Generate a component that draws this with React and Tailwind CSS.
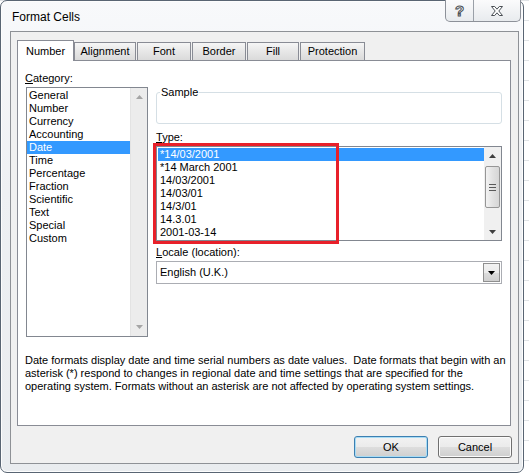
import React from 'react';

const categories = ['General', 'Number', 'Currency', 'Accounting', 'Date', 'Time', 'Percentage', 'Fraction', 'Scientific', 'Text', 'Special', 'Custom'];
const types = ['*14/03/2001', '*14 March 2001', '14/03/2001', '14/03/01', '14/3/01', '14.3.01', '2001-03-14'];
const tabs = [
  { label: 'Alignment', w: 'w-[62px]' },
  { label: 'Font', w: 'w-[54px]' },
  { label: 'Border', w: 'w-[54px]' },
  { label: 'Fill', w: 'w-[52px]' },
  { label: 'Protection', w: 'w-[65px]' },
];

function Arrow({ down, dim }) {
  return (
    <svg width="7" height="4" viewBox="0 0 7 4">
      <path d={down ? 'M0 0h7L3.5 4z' : 'M0 4h7L3.5 0z'} fill={dim ? '#a5a5a5' : '#404040'} />
    </svg>
  );
}

function ListRow({ text, selected }) {
  return (
    <div className={`h-[13px] leading-[13px] pl-[2px] whitespace-pre ${selected ? 'bg-[#3399ff] text-white' : 'text-black'}`}>
      {text}
    </div>
  );
}

function WinButton({ children, focused }) {
  return (
    <div
      className={`w-[74px] h-[22px] rounded-[3px] border flex items-center justify-center bg-[linear-gradient(to_bottom,#f2f2f2_0%,#ebebeb_50%,#dddddd_51%,#cfcfcf_100%)] ${
        focused ? 'border-[#3c7fb1] shadow-[inset_0_0_0_1px_#a8dcf5]' : 'border-[#707070] shadow-[inset_0_0_0_1px_#fcfcfc]'
      }`}
    >
      {children}
    </div>
  );
}

export default function App() {
  return (
    <div className="w-[529px] h-[476px] overflow-hidden bg-white bg-[linear-gradient(to_bottom,#e1e3e6_1px,transparent_1px)] bg-[size:100%_20px] font-['Liberation_Sans',Arial,sans-serif] text-[11px] text-black">
      <div className="w-[524px] h-[473px] flex flex-col rounded-[7px] border border-[#596573] bg-[linear-gradient(to_bottom,#f8f9fb,#eef0f3_40%,#e9ecef)] shadow-[inset_0_0_0_1px_#fdfdfd]">
        {/* title bar */}
        <div className="h-[30px] flex items-start pl-[11px] pr-[2px]">
          <div className="mt-[9px] text-[12px] leading-[14px] text-black">Format Cells</div>
          <div className="ml-auto -mt-px flex h-[22px] rounded-b-[5px] border border-t-0 border-[#8d9199] bg-[linear-gradient(to_bottom,#fbfbfc,#e8ebee)] overflow-hidden">
            <div className="w-[28px] flex items-center justify-center border-r border-[#9aa0a8] text-[15px] font-bold leading-none text-white [-webkit-text-stroke:1px_#4a4f55]">?</div>
            <div className="w-[46px] flex items-center justify-center">
              <svg width="12" height="10" viewBox="0 0 12 10">
                <path d="M0.5 0.5h3.2L6 3.2 8.3 0.5h3.2L7.8 5l3.7 4.5H8.3L6 6.8 3.7 9.5H0.5L4.2 5z" fill="#fff" stroke="#4a4f55" strokeWidth="1" strokeLinejoin="round" />
              </svg>
            </div>
          </div>
        </div>

        {/* client area */}
        <div className="ml-[9px] mr-[4px] mb-[8px] flex-1 flex flex-col border border-[#8e9196] bg-[#f0f0f0]">
          {/* tabs */}
          <div className="mt-[8px] ml-[6px] h-[20px] flex items-end">
            <div className="relative z-10 -mb-px w-[57px] h-[21px] border border-b-0 border-[#898c95] bg-white flex items-start justify-center pt-[4px] leading-[13px]">
              Number
            </div>
            {tabs.map((t, i) => (
              <div
                key={t.label}
                className={`${t.w} ${i > 0 ? 'ml-px' : ''} h-[18px] border border-b-0 border-[#898c95] bg-[linear-gradient(to_bottom,#f6f6f6,#e7e7e7_50%,#dadada)] flex items-start justify-center pt-[2px] leading-[13px]`}
              >
                {t.label}
              </div>
            ))}
          </div>

          {/* tab panel */}
          <div className="ml-[6px] w-[494px] h-[366px] border border-[#898c95] bg-white flex flex-col">
            <div className="flex pl-[8px] pt-[11px]">
              {/* category column */}
              <div className="w-[122px] flex flex-col">
                <div className="h-[13px] leading-[13px] -ml-px">
                  <span className="underline">C</span>ategory:
                </div>
                <div className="mt-[2px] h-[250px] border border-[#828790] flex">
                  <div className="flex-1 pt-px">
                    {categories.map((c) => (
                      <ListRow key={c} text={c} selected={c === 'Date'} />
                    ))}
                  </div>
                  <div className="w-[17px] bg-[#ececec] border-l border-[#e3e3e3] flex flex-col items-center justify-between py-[7px]">
                    <Arrow dim />
                    <Arrow down dim />
                  </div>
                </div>
              </div>

              {/* right column */}
              <div className="ml-[8px] w-[346px] flex flex-col">
                <div className="relative mt-[20px] h-[32px] rounded-[3px] border border-[#d5dfe5]">
                  <div className="absolute -top-[7px] left-[3px] bg-white px-[1px] leading-[13px]">Sample</div>
                </div>
                <div className="mt-[7px] h-[13px] leading-[13px]">
                  <span className="underline">T</span>ype:
                </div>
                <div className="relative mt-[2px] h-[95px] border border-[#828790] flex">
                  <div className="flex-1 pt-px pl-px">
                    {types.map((t, i) => (
                      <ListRow key={t} text={t} selected={i === 0} />
                    ))}
                  </div>
                  <div className="w-[17px] bg-[#f0f0f0] flex flex-col items-center">
                    <div className="h-[17px] flex items-center justify-center">
                      <Arrow />
                    </div>
                    <div className="mt-[2px] w-[15px] h-[42px] rounded-[2px] border border-[#969696] bg-[linear-gradient(to_right,#f3f3f3,#e2e2e2_50%,#d6d6d6)] flex flex-col items-center justify-center gap-[2px]">
                      <div className="w-[7px] h-px bg-[#5a5a5a]" />
                      <div className="w-[7px] h-px bg-[#5a5a5a]" />
                      <div className="w-[7px] h-px bg-[#5a5a5a]" />
                    </div>
                    <div className="mt-auto h-[17px] flex items-center justify-center">
                      <Arrow down />
                    </div>
                  </div>
                  <div className="absolute -left-[4px] -top-[4px] w-[186px] h-[101px] border-[3px] border-[#e8202a]" />
                </div>
                <div className="mt-[5px] h-[13px] leading-[13px]">
                  <span className="underline">L</span>ocale (location):
                </div>
                <div className="mt-[2px] h-[23px] border border-[#abadb3] flex items-center pl-[3px]">
                  <span>English (U.K.)</span>
                  <div className="ml-auto mr-px w-[17px] h-[19px] border border-[#8f8f8f] bg-[linear-gradient(to_bottom,#f2f2f2,#ebebeb_50%,#dddddd_51%,#cfcfcf)] flex items-center justify-center">
                    <svg width="7" height="4" viewBox="0 0 7 4">
                      <path d="M0 0h7L3.5 4z" fill="#000" />
                    </svg>
                  </div>
                </div>
              </div>
            </div>

            <div className="mt-[17px] pl-[7px] leading-[13px] whitespace-pre">
              <div>Date formats display date and time serial numbers as date values.  Date formats that begin with an</div>
              <div>asterisk (*) respond to changes in regional date and time settings that are specified for the</div>
              <div>operating system. Formats without an asterisk are not affected by operating system settings.</div>
            </div>
          </div>

          {/* buttons */}
          <div className="mt-[10px] flex justify-end gap-[10px] pr-[6px]">
            <WinButton focused>OK</WinButton>
            <WinButton>Cancel</WinButton>
          </div>
        </div>
      </div>
    </div>
  );
}
